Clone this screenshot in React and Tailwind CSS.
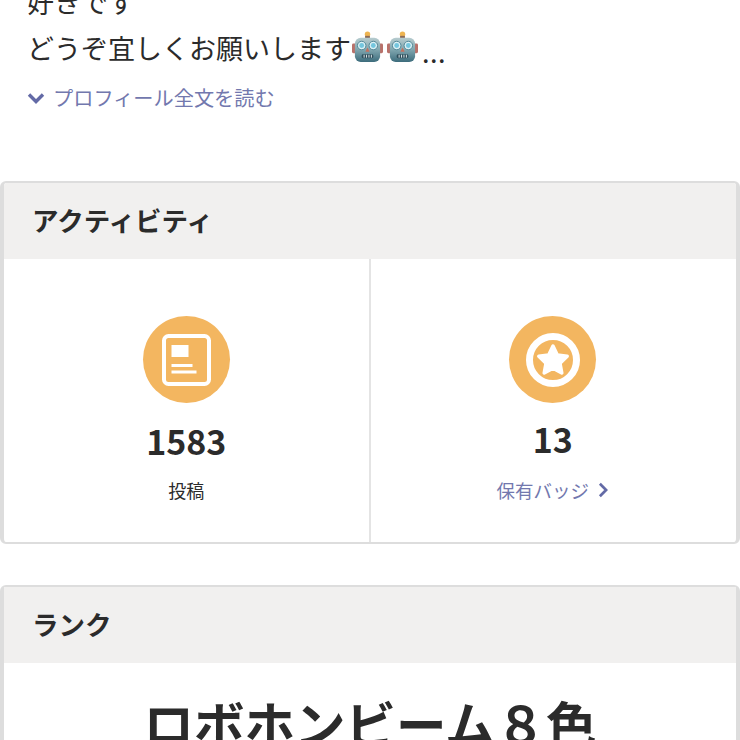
const jp = "font-['Noto_Sans_CJK_JP','Noto_Sans',sans-serif]";

function RobotEmoji({ id }) {
  return (
    <svg viewBox="0 0 32 32" className="w-[31px] h-[31px] shrink-0 mb-[3px]">
      <defs>
        <linearGradient id={id} x1="0" y1="0" x2="0" y2="1">
          <stop offset="0" stopColor="#b7cccf" />
          <stop offset="0.5" stopColor="#7fa5ae" />
          <stop offset="1" stopColor="#3c6c7c" />
        </linearGradient>
      </defs>
      <circle cx="16" cy="3.4" r="2.8" fill="#eeb451" />
      <rect x="13.5" y="5" width="5" height="3" fill="#8a6a58" />
      <rect x="0" y="13" width="4.5" height="10" rx="1.5" fill="#b9716a" />
      <rect x="27.5" y="13" width="4.5" height="10" rx="1.5" fill="#b9716a" />
      <rect x="3" y="7" width="26" height="25" rx="6" fill={`url(#${id})`} />
      <circle cx="10" cy="15" r="4.4" fill="#dcf0f4" stroke="#4f8494" />
      <circle cx="22" cy="15" r="4.4" fill="#dcf0f4" stroke="#4f8494" />
      <circle cx="10" cy="15" r="2.5" fill="#74c6de" />
      <circle cx="22" cy="15" r="2.5" fill="#74c6de" />
      <path d="M16 17 L18.2 21.5 H13.8 Z" fill="#c4705f" />
      <rect x="10" y="24" width="12" height="4" rx="1.5" fill="#2f4f5c" />
      <path d="M12.5 24.5v3M15 24.5v3M17.5 24.5v3M20 24.5v3" stroke="#dfe8ea" strokeWidth="1" />
    </svg>
  );
}

function PostIcon() {
  return (
    <div className="w-[87px] h-[87px] rounded-full bg-[#f3b660] flex items-center justify-center">
      <svg viewBox="0 0 49 52" className="w-[49px] h-[52px]" fill="none">
        <rect x="2" y="2" width="45" height="48" rx="4.5" stroke="#fff" strokeWidth="4" />
        <rect x="9.5" y="11" width="17" height="12" fill="#fff" />
        <rect x="9.5" y="30" width="21" height="3" fill="#fff" />
        <rect x="9.5" y="36.5" width="25" height="3" fill="#fff" />
      </svg>
    </div>
  );
}

function BadgeIcon() {
  return (
    <div className="w-[87px] h-[87px] rounded-full bg-[#f3b660] flex items-center justify-center">
      <svg viewBox="0 0 54 54" className="w-[54px] h-[54px]" fill="none">
        <circle cx="27" cy="27" r="23.5" stroke="#fff" strokeWidth="7" />
        <path
          d="M27 13l4.3 9 9.9 1.3-7.2 6.9 1.8 9.8-8.8-4.8-8.8 4.8 1.8-9.8-7.2-6.9 9.9-1.3z"
          fill="#fff"
          stroke="#fff"
          strokeWidth="3.5"
          strokeLinejoin="round"
        />
      </svg>
    </div>
  );
}

function CardHeader({ children }) {
  return (
    <div className="h-[76px] bg-[#f1f0ef] flex items-center pl-[28px] pb-[3px]">
      <h2 className="text-[26.5px] font-bold text-[#2b2b2b]">{children}</h2>
    </div>
  );
}

export default function App() {
  return (
    <div className={`w-[740px] h-[740px] overflow-hidden bg-white text-[#2b2b2b] ${jp}`}>
      {/* profile text, first line is cut by the top edge */}
      <div className="-mt-[21px] pl-[27px]">
        <p className="text-[27px] leading-[46px]">好きです</p>
        <div className="flex items-center h-[46px] text-[27px] leading-[46px]">
          <span>どうぞ宜しくお願いします</span>
          <div className="flex gap-[4px] ml-[1px]">
            <RobotEmoji id="robotA" />
            <RobotEmoji id="robotB" />
          </div>
          <span className="ml-[4px] text-[27px] tracking-[0.5px] leading-none mt-[6px]">...</span>
        </div>
        <div className="flex items-center mt-[5px] h-[44px] text-[#7278ae] text-[20.2px]">
          <svg viewBox="0 0 18 12" className="w-[18px] h-[12px] mr-[8px]" fill="none">
            <path d="M2 2.5l7 7 7-7" stroke="#636aa6" strokeWidth="3.4" />
          </svg>
          <span>プロフィール全文を読む</span>
        </div>
      </div>

      <section className="mt-[61px] h-[363px] border-x-4 border-y-2 border-[#dddddd] rounded-[6px] overflow-hidden">
        <CardHeader>アクティビティ</CardHeader>
        <div className="flex h-[283px]">
          <div className="flex-1 flex flex-col items-center border-r-2 border-[#e4e4e4] pt-[57px]">
            <PostIcon />
            <div className="mt-[13px] text-[34px] leading-[50px] font-bold">1583</div>
            <div className="mt-[11px] text-[18px] leading-[26px]">投稿</div>
          </div>
          <div className="flex-1 flex flex-col items-center pt-[57px] pr-[1px]">
            <BadgeIcon />
            <div className="mt-[11px] text-[34px] leading-[50px] font-bold">13</div>
            <div className="mt-[13px] flex items-center text-[18.5px] leading-[26px] text-[#7278ae]">
              <span>保有バッジ</span>
              <svg viewBox="0 0 12 18" className="w-[12px] h-[16px] ml-[8px]" fill="none">
                <path d="M2.5 2l7 7-7 7" stroke="#636aa6" strokeWidth="3" />
              </svg>
            </div>
          </div>
        </div>
      </section>

      <section className="mt-[41px] border-x-4 border-t-2 border-[#dddddd] rounded-t-[6px]">
        <CardHeader>ランク</CardHeader>
        <div className="pt-[23px] text-center text-[50.5px] leading-[72px] font-bold">ロボホンビーム８色</div>
      </section>
    </div>
  );
}
